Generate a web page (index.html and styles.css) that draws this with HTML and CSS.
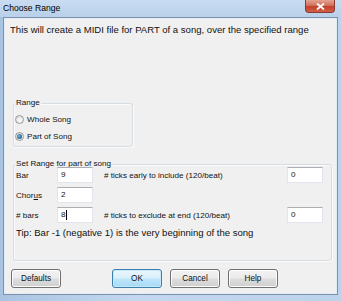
FILE: index.html
```html
<!DOCTYPE html>
<html>
<head>
<meta charset="utf-8">
<link rel="stylesheet" href="styles.css">
</head>
<body>
<div class="window">
  <div class="titlebar">
    <span class="title">Choose Range</span>
    <span class="close"><svg width="9" height="7" viewBox="0 0 9 7"><path d="M1 0.5 L8 6.5 M8 0.5 L1 6.5" stroke="#ffffff" stroke-width="1.8" fill="none"/></svg></span>
  </div>
  <div class="client">
    <p class="intro">This will create a MIDI file for PART of a song, over the specified range</p>
    <div class="group range">
      <span class="gtitle">Range</span>
      <div class="radios">
        <div class="radio"><span class="dot"></span>Whole Song</div>
        <div class="radio"><span class="dot checked"></span>Part of Song</div>
      </div>
    </div>
    <div class="group set">
      <span class="gtitle">Set Range for part of song</span>
      <div class="rows">
        <span class="lbl">Bar</span><span class="box">9</span><span class="lbl desc"># ticks early to include (120/beat)</span><span class="box">0</span>
        <span class="lbl">Chor<u>u</u>s</span><span class="box">2</span><span></span><span></span>
        <span class="lbl"># bars</span><span class="box">8<span class="caret"></span></span><span class="lbl desc"># ticks to exclude at end (120/beat)</span><span class="box">0</span>
      </div>
      <p class="tip">Tip: Bar -1 (negative 1) is the very beginning of the song</p>
    </div>
    <div class="buttons">
      <span class="btn defaults">Defaults</span>
      <span class="btn ok">OK</span>
      <span class="btn">Cancel</span>
      <span class="btn">Help</span>
    </div>
  </div>
</div>
</body>
</html>
```
FILE: styles.css
```css
html, body {
  margin: 0;
  padding: 0;
}
body {
  width: 341px;
  height: 301px;
  overflow: hidden;
  font-family: "Liberation Sans", Arial, sans-serif;
  color: #111;
}
.window {
  width: 341px;
  height: 301px;
  background: linear-gradient(90deg, #a9c4e2 0%, #c3d8ef 40%, #bcd3ec 100%);
  display: flex;
  flex-direction: column;
}
.titlebar {
  height: 17px;
  display: flex;
  align-items: flex-start;
  padding-left: 3px;
  background: linear-gradient(#c9dcf1, #b9d0ea);
}
.title {
  font-size: 8.6px;
  line-height: 16px;
  color: #000;
}
.close {
  margin-left: auto;
  margin-right: 6px;
  width: 30px;
  height: 13px;
  box-sizing: border-box;
  border: 1px solid #8a3a30;
  border-top: none;
  border-radius: 0 0 4px 4px;
  background: linear-gradient(#e3a393 0%, #d4705c 45%, #c2402a 55%, #d2604a 100%);
  display: flex;
  align-items: center;
  justify-content: center;
}
.client {
  margin: 0 3px 6px 3px;
  height: 278px;
  box-sizing: border-box;
  border: 1px solid #7d91ab;
  box-shadow: inset 0 0 0 1px #e4ebf3;
  background: #f0f0f0;
}
.intro {
  margin: 6px 0 0 6px;
  font-size: 9.55px;
  line-height: 12px;
}
.group {
  margin-left: 9px;
  border: 1px solid #d5dce2;
  border-radius: 3px;
  box-shadow: inset 1px 1px 0 #fbfbfb, 1px 1px 0 #fbfbfb;
  font-size: 8.1px;
}
.gtitle {
  display: block;
  width: max-content;
  margin: -6px 0 0 1px;
  padding: 0 1px;
  line-height: 10px;
  background: #f0f0f0;
}
.range {
  margin-top: 67px;
  width: 120px;
  height: 44px;
  box-sizing: border-box;
}
.radios {
  padding: 3px 0 0 1px;
}
.radio {
  height: 17px;
  display: flex;
  align-items: center;
  gap: 3px;
}
.dot {
  width: 9px;
  height: 9px;
  box-sizing: border-box;
  border-radius: 50%;
  border: 1px solid #9a9a9a;
  background: radial-gradient(circle at 60% 65%, #ffffff 0%, #e2e2e2 60%, #cfcfcf 100%);
  display: flex;
  align-items: center;
  justify-content: center;
}
.dot.checked::after {
  content: "";
  width: 5px;
  height: 5px;
  border-radius: 50%;
  background: radial-gradient(circle at 40% 40%, #7fc0ea 0%, #2a6d9e 55%, #134a72 100%);
}
.set {
  margin-top: 17px;
  width: 319px;
  height: 97px;
  box-sizing: border-box;
  padding: 0 8px 0 2px;
}
.set .gtitle {
  margin-left: -1px;
}
.rows {
  margin-top: -2px;
  display: grid;
  grid-template-columns: 41px 36px 1fr 36px;
  grid-auto-rows: 16px;
  row-gap: 4px;
  align-items: center;
}
.desc {
  padding-left: 11px;
}
.box {
  height: 16px;
  box-sizing: border-box;
  background: #ffffff;
  border: 1px solid #e2e6ec;
  border-top-color: #abadb3;
  padding-left: 3px;
  line-height: 14px;
  display: flex;
  align-items: center;
}
.caret {
  width: 1px;
  height: 10px;
  background: #000;
  margin-left: 0;
}
.tip {
  margin: 4px 0 0 0;
  font-size: 9.55px;
  line-height: 12px;
}
.buttons {
  margin: 8px 0 0 7px;
  display: flex;
  gap: 8px;
}
.btn {
  width: 50px;
  height: 19px;
  box-sizing: border-box;
  border: 1px solid #707070;
  border-radius: 3px;
  background: linear-gradient(#f2f2f2 0%, #ebebeb 48%, #dddddd 52%, #cfcfcf 100%);
  box-shadow: inset 0 0 0 1px #fcfcfc;
  font-size: 8.2px;
  display: flex;
  align-items: center;
  justify-content: center;
}
.defaults {
  margin-right: 43px;
}
.ok {
  border-color: #3c7fb1;
  background: linear-gradient(#eaf6fd 0%, #d9f0fc 48%, #bee6fd 52%, #a7d9f5 100%);
  box-shadow: inset 0 0 0 1px #c5e9fb;
}
```
